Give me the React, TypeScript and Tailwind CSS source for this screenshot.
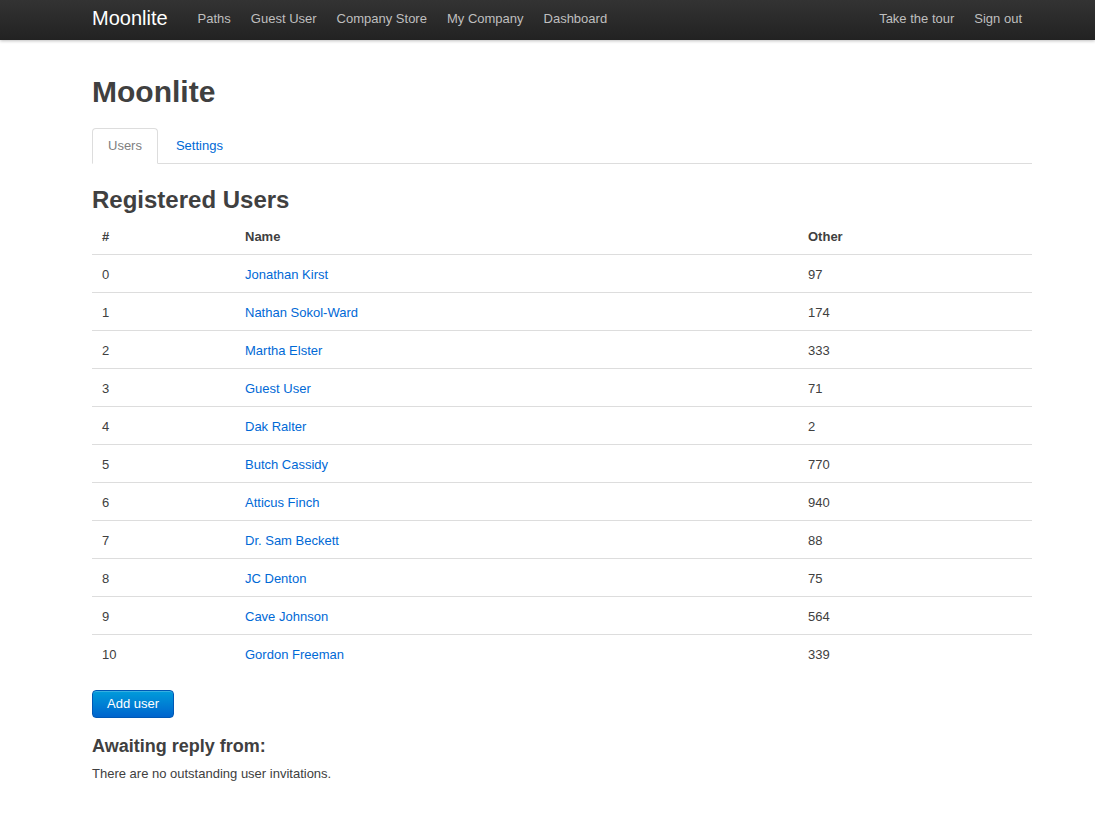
const users = [
  { id: 0, name: "Jonathan Kirst", other: 97 },
  { id: 1, name: "Nathan Sokol-Ward", other: 174 },
  { id: 2, name: "Martha Elster", other: 333 },
  { id: 3, name: "Guest User", other: 71 },
  { id: 4, name: "Dak Ralter", other: 2 },
  { id: 5, name: "Butch Cassidy", other: 770 },
  { id: 6, name: "Atticus Finch", other: 940 },
  { id: 7, name: "Dr. Sam Beckett", other: 88 },
  { id: 8, name: "JC Denton", other: 75 },
  { id: 9, name: "Cave Johnson", other: 564 },
  { id: 10, name: "Gordon Freeman", other: 339 },
];

const navLinks = ["Paths", "Guest User", "Company Store", "My Company", "Dashboard"];

const Topbar = () => (
  <div className="h-10 bg-gradient-to-b from-[#333333] to-[#222222] shadow-[0_1px_3px_rgba(0,0,0,0.25)]">
    <div className="ml-[92px] w-[940px] h-10 flex items-center">
      <a className="text-white text-[20px] leading-none pr-5 -mt-[4px]">Moonlite</a>
      <ul className="flex h-10">
        {navLinks.map((link) => (
          <li key={link}>
            <a className="block px-[10px] pt-[9px] pb-[11px] leading-[20px] text-[13px] text-[#bfbfbf]">{link}</a>
          </li>
        ))}
      </ul>
      <ul className="flex h-10 ml-auto">
        <li>
          <a className="block px-[10px] pt-[9px] pb-[11px] leading-[20px] text-[13px] text-[#bfbfbf]">Take the tour</a>
        </li>
        <li>
          <a className="block px-[10px] pt-[9px] pb-[11px] leading-[20px] text-[13px] text-[#bfbfbf]">Sign out</a>
        </li>
      </ul>
    </div>
  </div>
);

export default function App() {
  return (
    <div className="min-h-[816px] bg-white text-[#404040] text-[13px] leading-[18px] font-['Liberation_Sans',Arial,sans-serif]">
      <Topbar />
      <div className="ml-[92px] w-[940px] pt-[34px]">
        <h1 className="text-[30px] leading-[36px] font-bold">Moonlite</h1>

        {/* Tabs */}
        <ul className="flex mt-[18px] border-b border-[#dddddd] mb-[18px]">
          <li className="-mb-px mr-[2px]">
            <a className="block px-[15px] leading-[34px] border border-[#dddddd] border-b-white rounded-t-[4px] bg-white text-[#808080]">
              Users
            </a>
          </li>
          <li className="-mb-px mr-[2px]">
            <a className="block px-[15px] leading-[34px] border border-transparent text-[#0069d6]">Settings</a>
          </li>
        </ul>

        <h2 className="text-[24px] leading-[36px] font-bold">Registered Users</h2>

        <table className="w-[940px] border-collapse mb-[18px]">
          <thead>
            <tr>
              <th className="w-[145px] text-left font-bold pt-[10px] pb-[8px] px-[10px]">#</th>
              <th className="w-[563px] text-left font-bold pt-[10px] pb-[8px] px-[8px]">Name</th>
              <th className="text-left font-bold pt-[10px] pb-[8px] px-[8px]">Other</th>
            </tr>
          </thead>
          <tbody>
            {users.map((u) => (
              <tr key={u.id} className="border-t border-[#dddddd]">
                <td className="pt-[11px] pb-[8px] px-[10px]">{u.id}</td>
                <td className="pt-[11px] pb-[8px] px-[8px]">
                  <a className="text-[#0069d6]">{u.name}</a>
                </td>
                <td className="pt-[11px] pb-[8px] px-[8px]">{u.other}</td>
              </tr>
            ))}
          </tbody>
        </table>

        <button className="h-[28px] px-[14px] text-[13px] text-white rounded-[4px] border border-[#0058b5] bg-gradient-to-b from-[#049cdb] to-[#0064cd] shadow-[inset_0_1px_0_rgba(255,255,255,0.2)]">
          Add user
        </button>

        <h3 className="text-[18px] leading-[27px] font-bold mt-[15px]">Awaiting reply from:</h3>
        <p className="mt-[5px]">There are no outstanding user invitations.</p>
      </div>
    </div>
  );
}
